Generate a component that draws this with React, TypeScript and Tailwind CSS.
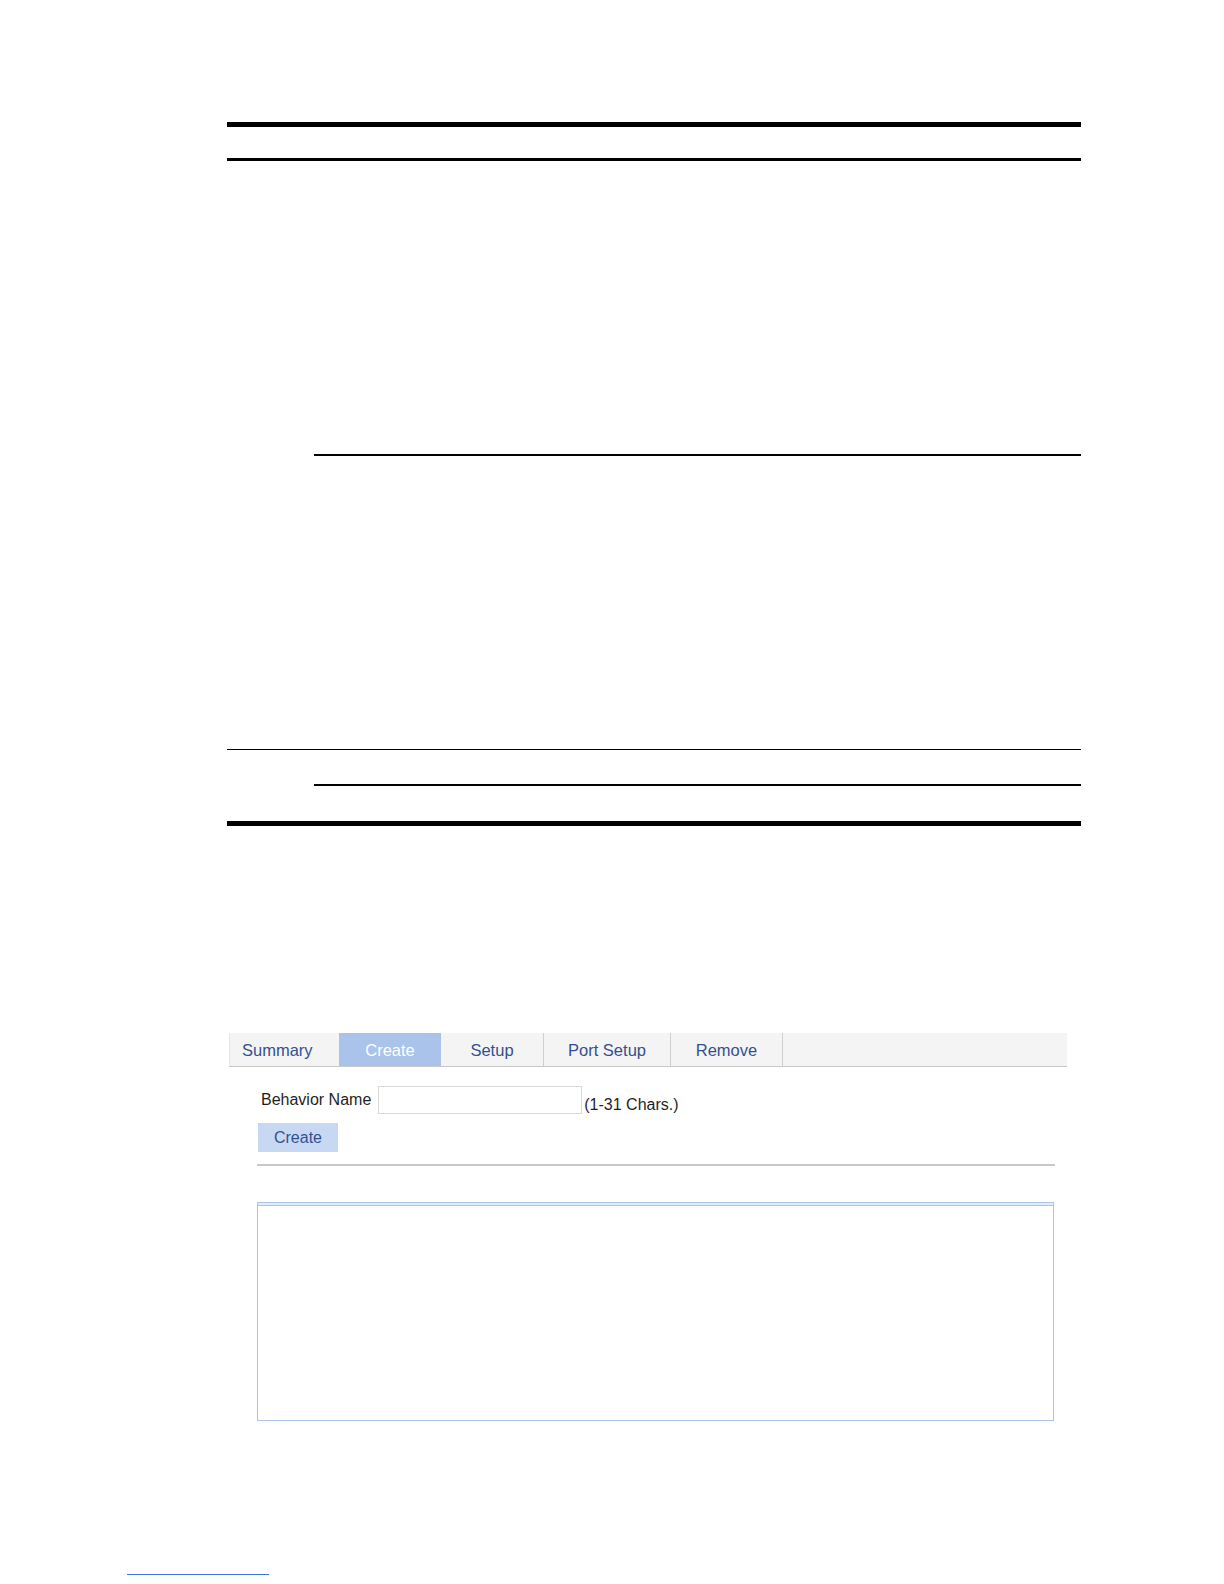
export default function App() {
  const tabs = [
    { label: "Summary", w: "w-[110px]", active: false, sep: false },
    { label: "Create", w: "w-[102px]", active: true, sep: false },
    { label: "Setup", w: "w-[103px]", active: false, sep: true },
    { label: "Port Setup", w: "w-[127px]", active: false, sep: true },
    { label: "Remove", w: "w-[112px]", active: false, sep: true },
  ];

  return (
    <div className="w-[1224px] h-[1584px] overflow-hidden bg-white flex flex-col font-['Liberation_Sans',Arial,sans-serif]">
      {/* table frame */}
      <div className="ml-[227px] mt-[122px] w-[854px] flex flex-col">
        <div className="h-[5px] bg-black" />
        <div className="h-[31px]" />
        <div className="h-[3px] bg-black" />
        <div className="h-[293px]" />
        <div className="ml-[87px] h-[1.5px] bg-black" />
        <div className="h-[293px]" />
        <div className="h-[1.5px] bg-black" />
        <div className="h-[34px]" />
        <div className="ml-[87px] h-[1.5px] bg-black" />
        <div className="h-[35px]" />
        <div className="h-[5px] bg-black" />
      </div>

      {/* web screen */}
      <div className="ml-[229px] mt-[207px] w-[838px] flex flex-col">
        <div className="h-[34px] flex bg-[#f4f4f4] border-b border-[#c9c9c9]">
          {tabs.map((t) => (
            <div
              key={t.label}
              className={`${t.w} h-full flex items-center pt-[3px] text-[16.5px] ${
                t.label === "Summary" ? "justify-start pl-[12px] border-l border-[#e6e6e6]" : "justify-center"
              } ${t.active ? "bg-[#a9c3eb] text-white" : "text-[#34508f]"} ${
                t.sep ? "border-r border-[#cfcfcf]" : ""
              }`}
            >
              {t.label}
            </div>
          ))}
        </div>

        <div className="pl-[28px] flex flex-col">
          <div className="mt-[19px] h-[28px] flex items-start">
            <span className="ml-[4px] mt-[2px] text-[16px] text-[#1f1f1f]">Behavior Name</span>
            <div className="ml-[7px] w-[204px] h-[28px] border border-[#d9d9d9] bg-white" />
            <span className="ml-[2px] mt-[7px] text-[16px] text-[#1f1f1f]">(1-31 Chars.)</span>
          </div>
          <div className="mt-[9px] ml-[1px] w-[80px] h-[29px] bg-[#c7d8f3] flex items-center justify-center pt-[1px] text-[16px] text-[#34508f]">
            Create
          </div>
          <div className="mt-[12px] w-[798px] h-[2px] bg-[#c8c8c8]" />
          <div className="mt-[36px] w-[797px] h-[219px] border border-[#a9c6e9] flex flex-col">
            <div className="h-[3px] border-b border-[#a9c6e9] bg-[#e3edf9]" />
          </div>
        </div>
      </div>

      <div className="ml-[127px] mt-[153px] w-[142px] h-[1px] bg-[#3f74e8]" />
    </div>
  );
}
